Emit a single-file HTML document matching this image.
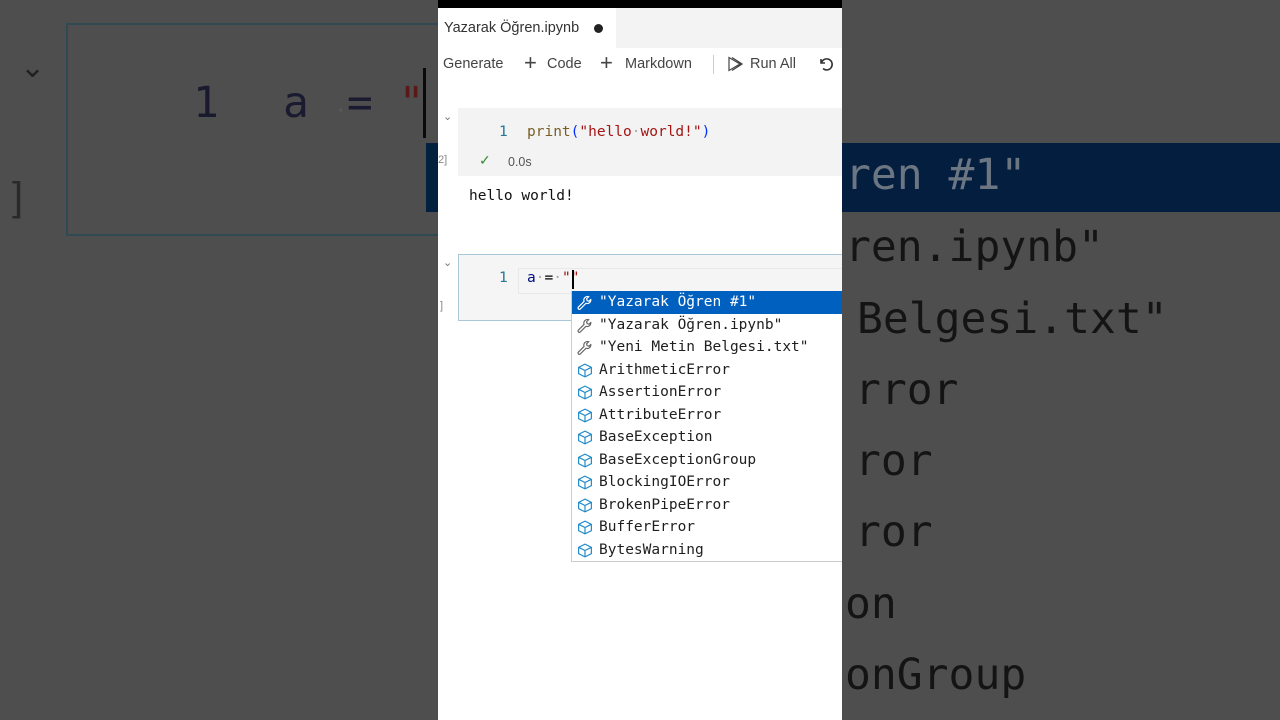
<!DOCTYPE html><html><head><meta charset="utf-8"><style>
*{margin:0;padding:0;box-sizing:border-box}
body{width:1280px;height:720px;overflow:hidden;background:#4e4e4e;position:relative;font-family:"Liberation Sans",sans-serif}
.a{position:absolute;white-space:nowrap}
.m{font-family:"DejaVu Sans Mono","Liberation Mono",monospace}
.big{font-size:43px;color:#141414}
#c{position:absolute;left:438px;top:0;width:404px;height:720px;background:#fff;overflow:hidden}
.sg{position:absolute;left:134px;width:270px;height:22.5px;font-size:14.5px;color:#1f1f1f;line-height:22.5px;padding-left:27px}
.sg svg{position:absolute;left:4px;top:3px}
</style></head><body>
<div class="a" style="left:66px;top:23px;width:372px;height:213px;border:2px solid #2f4a52;border-right:none"></div>
<div class="a" style="left:20px;top:50px;font-size:30px;color:#202020">&#8964;</div>
<div class="a m big" style="left:193px;top:78px;color:#1a1a2e">1</div>
<div class="a m big" style="left:283px;top:78px;color:#1a1a30">a <span style="color:#5a5a5a;font-size:20px">·</span>= <span style="color:#5a1818">"</span></div>
<div class="a" style="left:423px;top:68px;width:3px;height:70px;background:#0a0a0a"></div>
<div class="a big" style="left:12px;top:175px;font-size:40px;color:#2a2a2a">]</div>
<div class="a" style="left:426px;top:143px;width:12px;height:69px;background:#03203f"></div>
<div class="a" style="left:842px;top:143px;width:438px;height:69px;background:#031e3e"></div>
<div class="a m big" style="left:845px;top:150px;color:#6c7683">ren #1"</div>
<div class="a m big" style="left:845px;top:222px">ren.ipynb"</div>
<div class="a m big" style="left:857px;top:294px">Belgesi.txt"</div>
<div class="a m big" style="left:855px;top:365px">rror</div>
<div class="a m big" style="left:855px;top:436px">ror</div>
<div class="a m big" style="left:855px;top:507px">ror</div>
<div class="a m big" style="left:845px;top:579px">on</div>
<div class="a m big" style="left:845px;top:650px">onGroup</div>

<div id="c">
<div class="a" style="left:0;top:0;width:404px;height:8px;background:#000"></div>
<div class="a" style="left:0;top:8px;width:404px;height:40px;background:#f3f3f3"></div>
<div class="a" style="left:0;top:8px;width:178px;height:40px;background:#fff"></div>
<div class="a" style="left:6px;top:20px;font-size:14.5px;color:#333">Yazarak Öğren.ipynb</div>
<div class="a" style="left:156px;top:24px;width:9px;height:9px;border-radius:50%;background:#222"></div>
<div class="a" style="left:5px;top:56px;font-size:14.5px;color:#444">Generate</div>
<div class="a" style="left:86px;top:50px;font-size:22px;color:#444;font-weight:300">+</div>
<div class="a" style="left:109px;top:56px;font-size:14.5px;color:#444">Code</div>
<div class="a" style="left:162px;top:50px;font-size:22px;color:#444;font-weight:300">+</div>
<div class="a" style="left:187px;top:56px;font-size:14.5px;color:#444">Markdown</div>
<div class="a" style="left:275px;top:55px;width:1px;height:19px;background:#ccc"></div>
<svg class="a" style="left:289px;top:56px" width="16" height="16" viewBox="0 0 16 16"><path d="M2 1.5v13l11-6.5z M5 1.5l10 6.5-10 6.5" fill="none" stroke="#444" stroke-width="1.2"/></svg>
<div class="a" style="left:312px;top:56px;font-size:14.5px;color:#444">Run All</div>
<svg class="a" style="left:380px;top:56px" width="16" height="16" viewBox="0 0 16 16"><path d="M3 3v4h4 M3.5 6.5A5.5 5.5 0 1 1 5 12.5" fill="none" stroke="#333" stroke-width="1.6"/></svg>

<div class="a" style="left:20px;top:108px;width:384px;height:68px;background:#f3f3f3"></div>
<div class="a" style="left:5px;top:110px;font-size:11px;color:#777">&#8964;</div>
<div class="a m" style="left:61px;top:124px;font-size:14.5px;color:#237893">1</div>
<div class="a m" style="left:89px;top:124px;font-size:14.5px"><span style="color:#795e26">print</span><span style="color:#0431fa">(</span><span style="color:#a31515">"hello<span style="color:#aaa">·</span>world!"</span><span style="color:#0431fa">)</span></div>
<div class="a" style="left:41px;top:152px;font-size:14px;color:#388a34">✓</div>
<div class="a" style="left:70px;top:155px;font-size:12.5px;color:#555">0.0s</div>
<div class="a" style="left:0;top:154px;font-size:11px;color:#888">2]</div>
<div class="a m" style="left:31px;top:188px;font-size:14.5px;color:#111">hello world!</div>

<div class="a" style="left:20px;top:254px;width:390px;height:67px;border:1px solid #a8c8d8;background:#f5f5f5"></div>
<div class="a" style="left:80px;top:268px;width:330px;height:26px;border:1px solid #e8e8e8;border-right:none"></div>
<div class="a" style="left:5px;top:256px;font-size:11px;color:#777">&#8964;</div>
<div class="a" style="left:2px;top:300px;font-size:11px;color:#888">]</div>
<div class="a m" style="left:61px;top:270px;font-size:14.5px;color:#237893">1</div>
<div class="a m" style="left:89px;top:270px;font-size:14.5px;color:#001080">a<span style="color:#aaa">·</span><span style="color:#000">=</span><span style="color:#aaa">·</span><span style="color:#a31515">""</span></div>
<div class="a" style="left:134px;top:270px;width:2px;height:19px;background:#000"></div>
<div class="a" style="left:133px;top:291px;width:315px;height:271px;background:#fff;border:1px solid #ccc"></div>
<div class="sg m" style="top:291px;background:#0060c0;color:#fff">"Yazarak Öğren #1"<svg width="18" height="17" viewBox="0 0 16 16"><path d="M13.5 5.5a3.5 3.5 0 0 1-4.6 3.3L3.5 14.2a1.3 1.3 0 0 1-1.8-1.8L7.1 7A3.5 3.5 0 0 1 11.5 2.5L9.5 4.5l.5 1.8 1.8.5 2-2" fill="none" stroke="#fff" stroke-width="1.1"/></svg></div>
<div class="sg m" style="top:313.5px">"Yazarak Öğren.ipynb"<svg width="18" height="17" viewBox="0 0 16 16"><path d="M13.5 5.5a3.5 3.5 0 0 1-4.6 3.3L3.5 14.2a1.3 1.3 0 0 1-1.8-1.8L7.1 7A3.5 3.5 0 0 1 11.5 2.5L9.5 4.5l.5 1.8 1.8.5 2-2" fill="none" stroke="#666" stroke-width="1.1"/></svg></div>
<div class="sg m" style="top:336px">"Yeni Metin Belgesi.txt"<svg width="18" height="17" viewBox="0 0 16 16"><path d="M13.5 5.5a3.5 3.5 0 0 1-4.6 3.3L3.5 14.2a1.3 1.3 0 0 1-1.8-1.8L7.1 7A3.5 3.5 0 0 1 11.5 2.5L9.5 4.5l.5 1.8 1.8.5 2-2" fill="none" stroke="#666" stroke-width="1.1"/></svg></div>
<div class="sg m" style="top:358.5px">ArithmeticError<svg width="18" height="17" viewBox="0 0 16 16"><path d="M8 2l6 3v6l-6 3-6-3V5z M2 5l6 3 6-3 M8 8v6" fill="none" stroke="#1e8ac8" stroke-width="1.1"/></svg></div>
<div class="sg m" style="top:381px">AssertionError<svg width="18" height="17" viewBox="0 0 16 16"><path d="M8 2l6 3v6l-6 3-6-3V5z M2 5l6 3 6-3 M8 8v6" fill="none" stroke="#1e8ac8" stroke-width="1.1"/></svg></div>
<div class="sg m" style="top:403.5px">AttributeError<svg width="18" height="17" viewBox="0 0 16 16"><path d="M8 2l6 3v6l-6 3-6-3V5z M2 5l6 3 6-3 M8 8v6" fill="none" stroke="#1e8ac8" stroke-width="1.1"/></svg></div>
<div class="sg m" style="top:426px">BaseException<svg width="18" height="17" viewBox="0 0 16 16"><path d="M8 2l6 3v6l-6 3-6-3V5z M2 5l6 3 6-3 M8 8v6" fill="none" stroke="#1e8ac8" stroke-width="1.1"/></svg></div>
<div class="sg m" style="top:448.5px">BaseExceptionGroup<svg width="18" height="17" viewBox="0 0 16 16"><path d="M8 2l6 3v6l-6 3-6-3V5z M2 5l6 3 6-3 M8 8v6" fill="none" stroke="#1e8ac8" stroke-width="1.1"/></svg></div>
<div class="sg m" style="top:471px">BlockingIOError<svg width="18" height="17" viewBox="0 0 16 16"><path d="M8 2l6 3v6l-6 3-6-3V5z M2 5l6 3 6-3 M8 8v6" fill="none" stroke="#1e8ac8" stroke-width="1.1"/></svg></div>
<div class="sg m" style="top:493.5px">BrokenPipeError<svg width="18" height="17" viewBox="0 0 16 16"><path d="M8 2l6 3v6l-6 3-6-3V5z M2 5l6 3 6-3 M8 8v6" fill="none" stroke="#1e8ac8" stroke-width="1.1"/></svg></div>
<div class="sg m" style="top:516px">BufferError<svg width="18" height="17" viewBox="0 0 16 16"><path d="M8 2l6 3v6l-6 3-6-3V5z M2 5l6 3 6-3 M8 8v6" fill="none" stroke="#1e8ac8" stroke-width="1.1"/></svg></div>
<div class="sg m" style="top:538.5px">BytesWarning<svg width="18" height="17" viewBox="0 0 16 16"><path d="M8 2l6 3v6l-6 3-6-3V5z M2 5l6 3 6-3 M8 8v6" fill="none" stroke="#1e8ac8" stroke-width="1.1"/></svg></div>
</div>
</body></html>
